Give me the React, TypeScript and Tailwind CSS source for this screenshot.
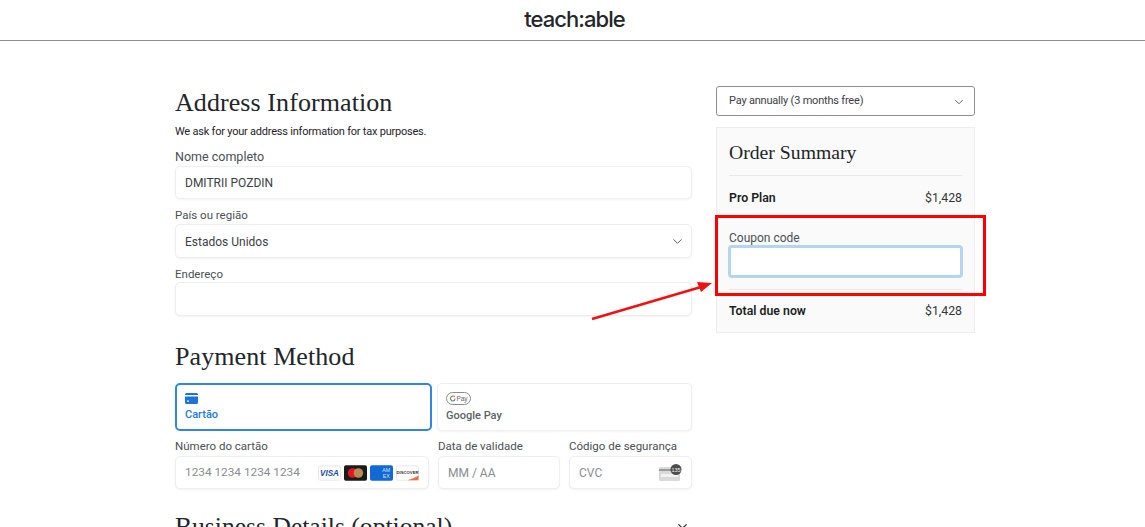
import React from "react";
import { ChevronDown } from "lucide-react";

const sans = "font-['Roboto','Noto_Sans',sans-serif]";
const label = "text-[11.5px] leading-[17px] text-[#4a4f55]";
const box = "rounded-[5px] border border-[#eeeeee] bg-white shadow-[0_1px_2px_rgba(0,0,0,0.05)]";
const serifH = "font-['Liberation_Serif',serif] text-[26px] leading-[30px] tracking-[0.08px] text-[#22252a]";

function Field({ title, className = "", titleClass = label, children }: { title: string; className?: string; titleClass?: string; children: React.ReactNode }) {
  return (
    <div className={className}>
      <div className={titleClass}>{title}</div>
      {children}
    </div>
  );
}

function CardLogos() {
  return (
    <div className="flex items-center gap-[3px]">
      <svg width="23" height="16" viewBox="0 0 24 16">
        <rect x="0.5" y="0.5" width="23" height="15" rx="2" fill="#fff" stroke="#e6e6e6" />
        <text x="12" y="11.5" textAnchor="middle" fontSize="8.5" fontWeight="800" fontStyle="italic" fill="#1a4fa0" fontFamily="Liberation Sans">VISA</text>
      </svg>
      <svg width="23" height="16" viewBox="0 0 24 16">
        <rect width="24" height="16" rx="2" fill="#1a1a1a" />
        <circle cx="9" cy="8" r="5" fill="#e8131d" />
        <circle cx="15" cy="8" r="5" fill="#b88a55" />
      </svg>
      <svg width="23" height="16" viewBox="0 0 24 16">
        <rect width="24" height="16" rx="2" fill="#1269d3" />
        <text x="17" y="7" textAnchor="middle" fontSize="5.5" fill="#cfe2fb" fontFamily="Liberation Sans">AM</text>
        <text x="17" y="13" textAnchor="middle" fontSize="5.5" fill="#cfe2fb" fontFamily="Liberation Sans">EX</text>
      </svg>
      <svg width="23" height="16" viewBox="0 0 24 16">
        <rect x="0.5" y="0.5" width="23" height="15" rx="2" fill="#fff" stroke="#e6e6e6" />
        <text x="12" y="9.5" textAnchor="middle" fontSize="4.4" fontWeight="700" fill="#333" fontFamily="Liberation Sans">DISCOVER</text>
        <path d="M12 15.5 L23.5 15.5 L23.5 10.5 Q18 14 12 15.5Z" fill="#e8704a" />
      </svg>
    </div>
  );
}

export default function App() {
  return (
    <div className={`${sans} relative h-[527px] w-[1145px] overflow-hidden bg-white`}>
      <header className="flex h-[41px] items-center justify-center border-b border-[#8f8f8f] pb-[2px]">
        <span className="ml-[4px] font-['Inter',sans-serif] text-[22px] font-medium leading-none tracking-[-0.95px] text-[#24262b]">teach:able</span>
      </header>

      <main className="ml-[175px] flex w-[800px] gap-[24px]">
        <section className="w-[517px] pt-[47px]">
          <h2 className={serifH}>Address Information</h2>
          <p className="mt-[6px] text-[11px] leading-[16px] tracking-[-0.22px] text-[#1f2328]">We ask for your address information for tax purposes.</p>

          <Field title="Nome completo" className="mt-[8px]" titleClass="text-[12.5px] leading-[17px] text-[#4a4f55]">
            <div className={`${box} mt-[1px] flex h-[33px] items-center px-[9px] text-[12px] text-[#3c4046]`}>DMITRII POZDIN</div>
          </Field>
          <Field title="País ou região" className="mt-[8px]">
            <div className={`${box} flex h-[34px] items-center justify-between pl-[9px] pr-[6px] pt-[1px] text-[12px] text-[#3c4046]`}>
              Estados Unidos
              <ChevronDown size={15} strokeWidth={1.5} className="text-[#555]" />
            </div>
          </Field>
          <Field title="Endereço" className="mt-[8px]">
            <div className={`${box} -mt-[1px] h-[34px]`} />
          </Field>

          <h2 className={`mt-[26px] ${serifH}`}>Payment Method</h2>

          <div className="mt-[11px] flex gap-[5px]">
            <div className="flex h-[48px] w-[257px] flex-col justify-center rounded-[5px] border-2 border-[#2f86e6] bg-white pl-[8px] text-[#2279dc]">
              <svg width="13" height="11" viewBox="0 0 13 11" className="mb-[3px]">
                <path d="M0 1.5A1.5 1.5 0 0 1 1.5 0h10A1.5 1.5 0 0 1 13 1.5V2H0Z M0 3.5h13v6a1.5 1.5 0 0 1-1.5 1.5h-10A1.5 1.5 0 0 1 0 9.5Z" fill="#1b74d8" />
                <rect x="2" y="7.5" width="2" height="1.2" fill="#fff" />
              </svg>
              <span className="text-[11px] font-medium leading-[15px]">Cartão</span>
            </div>
            <div className={`${box} flex h-[48px] w-[255px] flex-col justify-center pl-[8px] text-[#5b5f64]`}>
              <svg width="25" height="13" viewBox="0 0 25 13" className="mb-[3px]">
                <rect x="0.5" y="0.5" width="24" height="12" rx="6" fill="#fff" stroke="#8a8a8a" />
                <path d="M9 6.5A2.5 2.5 0 0 1 7 9" fill="none" stroke="#4a90d9" strokeWidth="1.2" />
                <path d="M7 9A2.5 2.5 0 0 1 4.8 5.3" fill="none" stroke="#3aa757" strokeWidth="1.2" />
                <path d="M4.8 5.3A2.5 2.5 0 0 1 8.8 4.8" fill="none" stroke="#e8534a" strokeWidth="1.2" />
                <text x="16" y="9" textAnchor="middle" fontSize="6.5" fill="#666" fontFamily="Liberation Sans">Pay</text>
              </svg>
              <span className="text-[11px] font-medium leading-[15px]">Google Pay</span>
            </div>
          </div>

          <div className="mt-[7px] flex">
            <Field title="Número do cartão" className="w-[254px]">
              <div className={`${box} mt-[1px] flex h-[33px] items-center justify-between pl-[9px] pr-[9px] text-[11.8px] text-[#8a8d91]`}>
                1234 1234 1234 1234
                <CardLogos />
              </div>
            </Field>
            <Field title="Data de validade" className="ml-[9px] w-[122px]">
              <div className={`${box} mt-[1px] flex h-[33px] items-center px-[9px] text-[12px] text-[#8a8d91]`}>MM / AA</div>
            </Field>
            <Field title="Código de segurança" className="ml-[9px] w-[123px]">
              <div className={`${box} mt-[1px] flex h-[33px] items-center justify-between pl-[9px] pr-[9px] text-[12px] text-[#8a8d91]`}>
                CVC
                <svg width="23" height="17" viewBox="0 0 23 17">
                  <rect x="0" y="3" width="21" height="14" rx="1.5" fill="#d9d9d9" />
                  <rect x="0" y="5" width="21" height="2" fill="#9a9a9a" />
                  <rect x="2" y="10" width="17" height="3" fill="#f2f2f2" />
                  <circle cx="17" cy="5.5" r="5.5" fill="#4d4d4d" />
                  <text x="17" y="7.5" textAnchor="middle" fontSize="5.5" fill="#eee" fontFamily="Liberation Sans">135</text>
                </svg>
              </div>
            </Field>
          </div>

          <div className="mt-[23px] flex items-start justify-between pr-[2px]">
            <h2 className="font-['Liberation_Serif',serif] text-[25.6px] leading-[30px] text-[#22252a]">Business Details (optional)</h2>
            <ChevronDown size={15} strokeWidth={2} className="mt-[7px] text-[#333]" />
          </div>
        </section>

        <aside className="w-[259px] pt-[45px]">
          <div className="flex h-[30px] items-center justify-between rounded-[3px] border border-[#8e8e8e] bg-white pl-[12px] pr-[8px] pt-[1px] text-[11px] tracking-[-0.2px] text-[#3c4046]">
            Pay annually (3 months free)
            <ChevronDown size={14} strokeWidth={1.5} className="text-[#555]" />
          </div>

          <div className="mt-[11px] h-[206px] border border-[#eeeeee] bg-[#fafafa] px-[12px]">
            <h3 className="mt-[12px] font-['Liberation_Serif',serif] text-[19.7px] leading-[24px] text-[#22252a]">Order Summary</h3>
            <div className="mt-[11px] border-t border-[#e8e8e8]" />
            <div className="mt-[14px] flex items-center justify-between text-[12.3px] leading-[17px] text-[#1c1f23]">
              <span className="font-semibold">Pro Plan</span>
              <span className="text-[#33373c]">$1,428</span>
            </div>
            <div className="mt-[23px] text-[12px] leading-[17px] text-[#4a4f55]">Coupon code</div>
            <div className="-mx-[1px] -mt-[2px] h-[33px] rounded-[4px] border-[3px] border-[#b5d4ef] bg-white" />
            <div className="mt-[11px] border-t border-[#e8e8e8]" />
            <div className="mt-[13px] flex items-center justify-between text-[12.3px] leading-[17px] text-[#1c1f23]">
              <span className="font-semibold">Total due now</span>
              <span className="text-[#33373c]">$1,428</span>
            </div>
          </div>
        </aside>
      </main>

      <div className="absolute left-[715px] top-[215px] h-[81px] w-[271px] border-[3px] border-[#ff0000]" />
      <svg className="absolute left-[585px] top-[275px]" width="135" height="50" viewBox="0 0 135 50">
        <path d="M7 44 L116 12" stroke="#ee1111" strokeWidth="2.6" fill="none" />
        <path d="M127 8 L112 7 L116 17 Z" fill="#ee1111" />
      </svg>
    </div>
  );
}
